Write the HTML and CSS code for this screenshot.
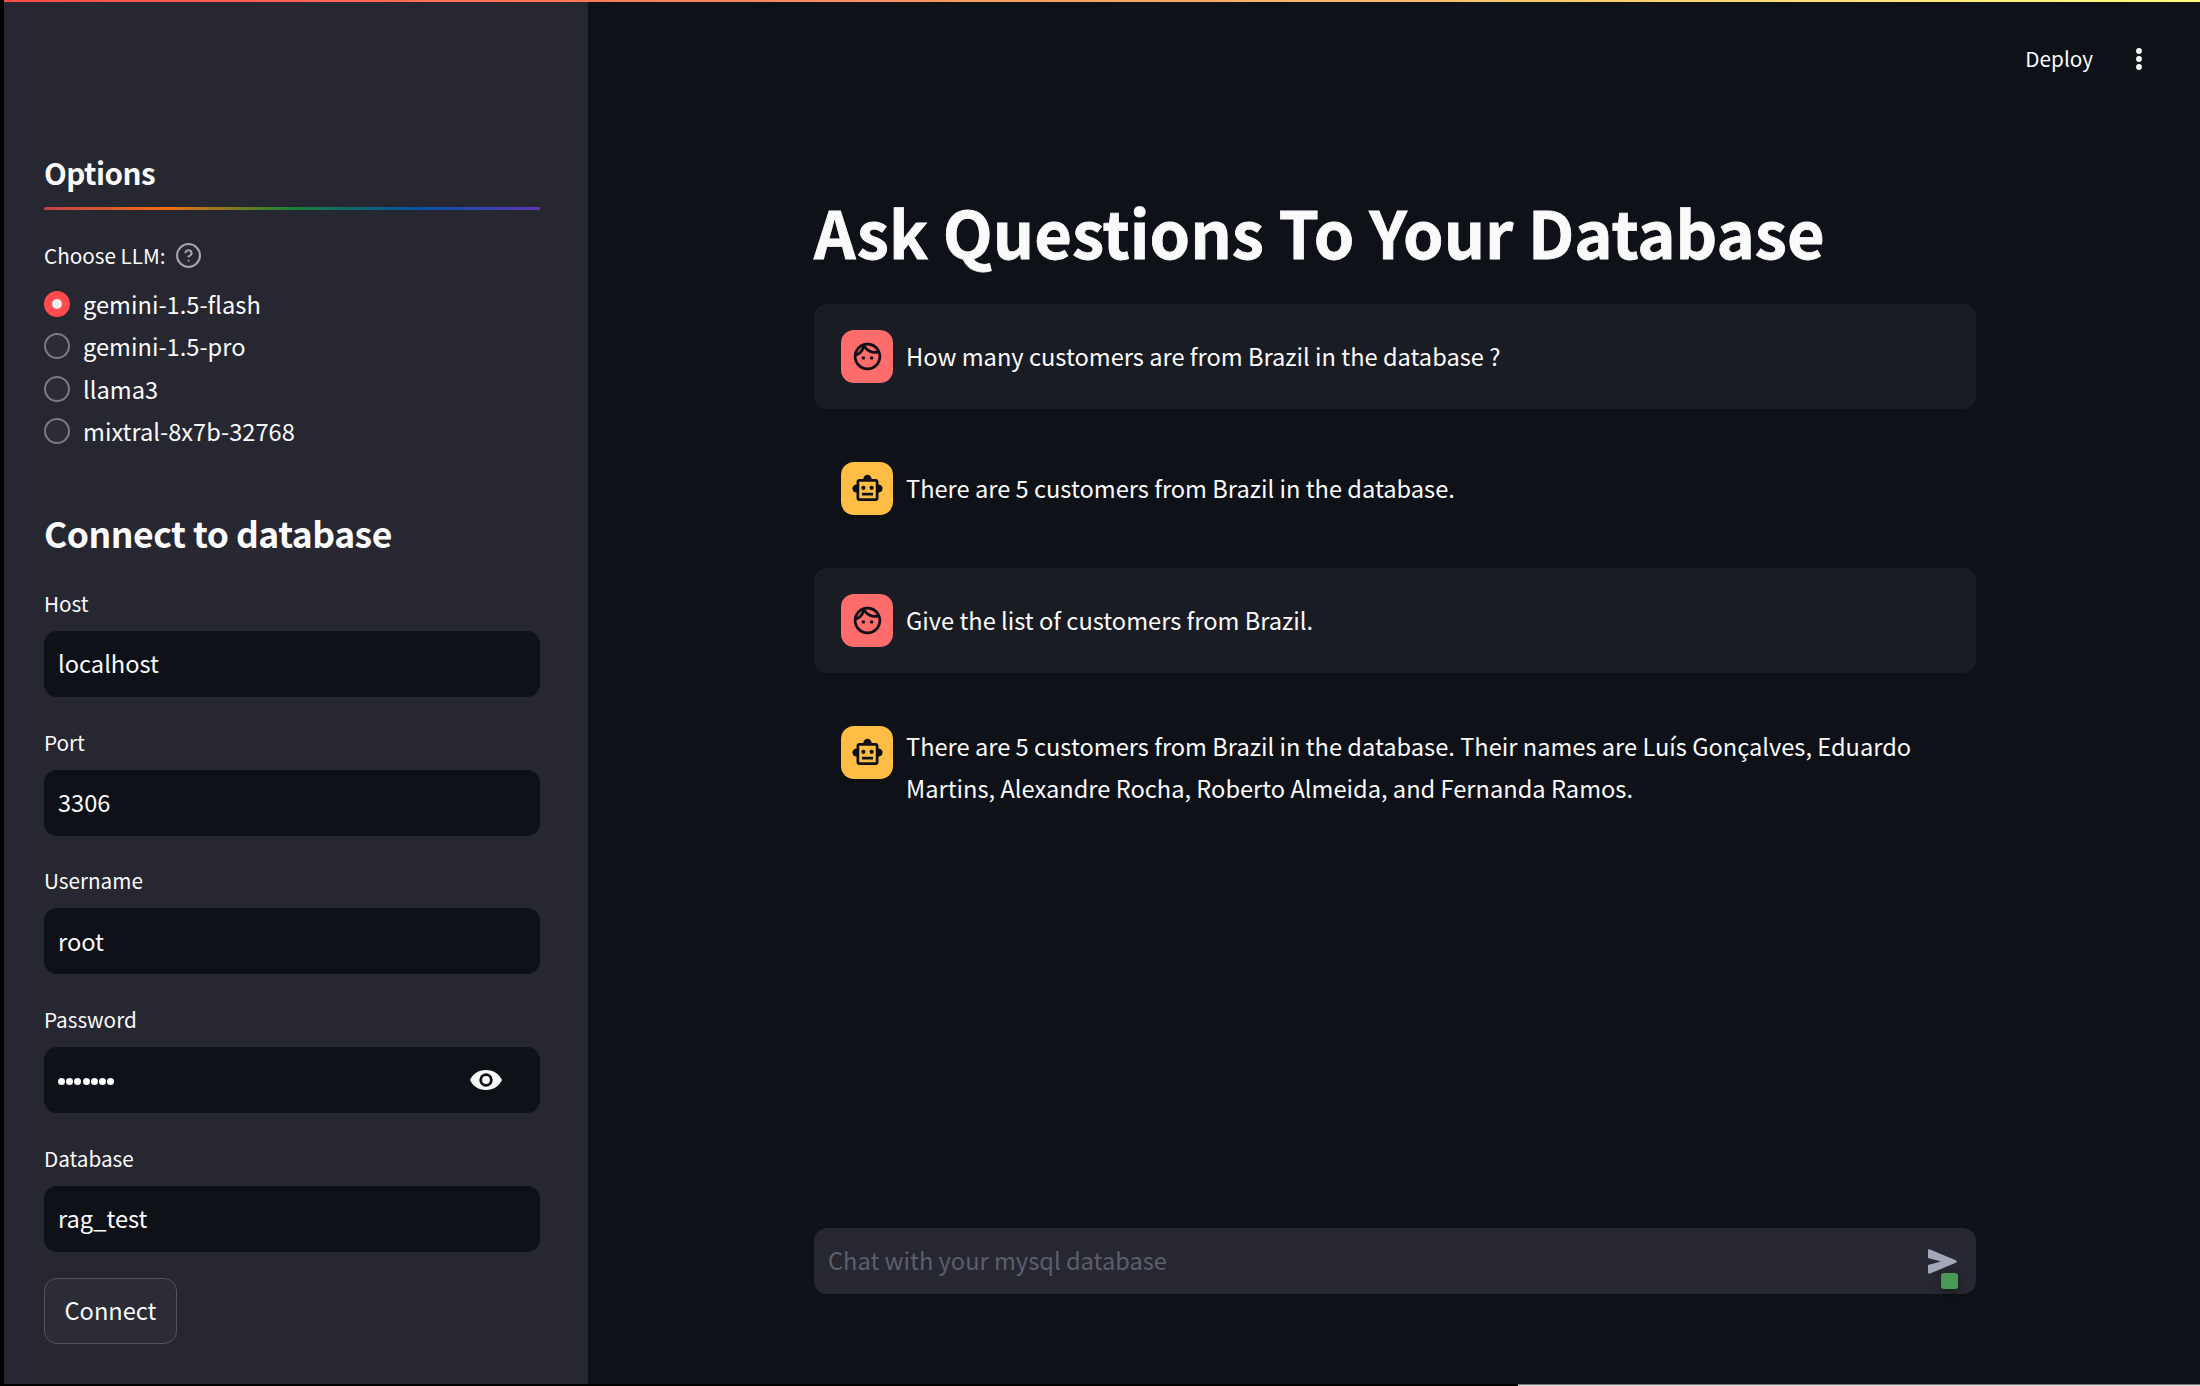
FILE: index.html
```html
<!DOCTYPE html>
<html lang="en">
<head>
<meta charset="utf-8">
<title>Ask Questions To Your Database</title>
<link rel="stylesheet" href="styles.css">
</head>
<body>
<svg class="defs" width="0" height="0">
  <symbol id="face" viewBox="0 0 24 24"><path d="M10.250 13c0 .69-.56 1.250-1.250 1.250S7.750 13.690 7.750 13s.56-1.250 1.250-1.250 1.250.56 1.250 1.250zM15 11.750c-.69 0-1.250.56-1.250 1.250s.56 1.250 1.250 1.250 1.250-.56 1.250-1.250-.56-1.250-1.250-1.250zm7 .25c0 5.520-4.480 10-10 10S2 17.520 2 12 6.480 2 12 2s10 4.480 10 10zM10.660 4.120C12.060 6.440 14.600 8 17.500 8c.46 0 .91-.05 1.340-.12C17.440 5.560 14.900 4 12 4c-.46 0-.91.05-1.340.12zM4.420 9.470c1.710-.97 3.030-2.550 3.660-4.440C6.370 6 5.050 7.580 4.420 9.470zM20 12c0-.78-.12-1.530-.33-2.240-.7.15-1.420.24-2.170.24-3.130 0-5.920-1.440-7.760-3.690C8.690 8.870 6.600 10.880 4 11.860c.01.04 0 .09 0 .14 0 4.410 3.590 8 8 8s8-3.590 8-8z"/></symbol>
  <symbol id="robot" viewBox="0 0 24 24"><path d="M20 9V7c0-1.100-.9-2-2-2h-3c0-1.660-1.340-3-3-3S9 3.340 9 5H6c-1.100 0-2 .9-2 2v2c-1.660 0-3 1.340-3 3s1.340 3 3 3v4c0 1.100.9 2 2 2h12c1.100 0 2-.9 2-2v-4c1.660 0 3-1.340 3-3s-1.340-3-3-3zm-2 10H6V7h12v12zm-9-6c-.83 0-1.500-.67-1.500-1.500S8.170 10 9 10s1.500.67 1.500 1.500S9.830 13 9 13zm7.500-1.500c0 .83-.67 1.500-1.500 1.500s-1.500-.67-1.500-1.500.67-1.500 1.500-1.500 1.500.67 1.500 1.500zM8 15h8v2H8v-2z"/></symbol>
</svg>
<div class="app">
  <aside class="sidebar">
    <h3 class="options">Options</h3>
    <div class="rainbow"></div>
    <div class="llm-label">
      <span>Choose LLM:</span>
      <svg class="help" viewBox="0 0 24 24"><circle cx="12" cy="12" r="11"/><path d="M9.090 9a3 3 0 0 1 5.830 1c0 2-3 3-3 3M12 17h.01"/></svg>
    </div>
    <div class="radios">
      <label class="radio"><span class="dot on"></span><span>gemini-1.5-flash</span></label>
      <label class="radio"><span class="dot"></span><span>gemini-1.5-pro</span></label>
      <label class="radio"><span class="dot"></span><span>llama3</span></label>
      <label class="radio"><span class="dot"></span><span>mixtral-8x7b-32768</span></label>
    </div>
    <h2 class="connect-title">Connect to database</h2>
    <div class="fields">
      <div class="field"><div class="label">Host</div><div class="input">localhost</div></div>
      <div class="field"><div class="label">Port</div><div class="input">3306</div></div>
      <div class="field"><div class="label">Username</div><div class="input">root</div></div>
      <div class="field"><div class="label">Password</div><div class="input"><span class="secret"><i></i><i></i><i></i><i></i><i></i><i></i><i></i></span>
        <svg class="eye" viewBox="0 0 32 20" preserveAspectRatio="none"><path d="M16 0C8.700 0 2.500 4.100 0 10c2.500 5.900 8.700 10 16 10s13.500-4.100 16-10C29.500 4.100 23.300 0 16 0zm0 16.700a6.700 6.700 0 1 1 0-13.400 6.700 6.700 0 0 1 0 13.400zm0-10.600a3.900 3.900 0 1 0 0 7.800 3.900 3.900 0 0 0 0-7.800z"/></svg></div></div>
      <div class="field"><div class="label">Database</div><div class="input">rag_test</div></div>
    </div>
    <button class="connect">Connect</button>
  </aside>
  <main class="main">
    <header class="header">
      <span class="deploy">Deploy</span>
      <svg class="kebab" viewBox="0 0 6 24"><circle cx="3" cy="4" r="2.900"/><circle cx="3" cy="12" r="2.900"/><circle cx="3" cy="20" r="2.900"/></svg>
    </header>
    <section class="chat">
      <h1 class="title">Ask Questions To Your Database</h1>
      <div class="messages">
        <div class="msg user"><span class="avatar"><svg><use href="#face"/></svg></span><p>How many customers are from Brazil in the database ?</p></div>
        <div class="msg"><span class="avatar bot"><svg><use href="#robot"/></svg></span><p>There are 5 customers from Brazil in the database.</p></div>
        <div class="msg user"><span class="avatar"><svg><use href="#face"/></svg></span><p>Give the list of customers from Brazil.</p></div>
        <div class="msg"><span class="avatar bot"><svg><use href="#robot"/></svg></span><p class="long">There are 5 customers from Brazil in the database. Their names are Luís Gonçalves, Eduardo<br>Martins, Alexandre Rocha, Roberto Almeida, and Fernanda Ramos.</p></div>
      </div>
      <div class="prompt">
        <span class="placeholder">Chat with your mysql database</span>
        <svg class="send" viewBox="0 0 29 25"><path d="M0 1.700C0 .4 1 0 2 .4l25.800 10.900c1.300.6 1.300 1.800 0 2.400L2 24.600c-1 .4-2 0-2-1.300V15.900L13 12.500 0 9.100z"/></svg>
        <i class="badge"></i>
      </div>
    </section>
  </main>
</div>
<div class="edge-top"></div>
<div class="edge-bottom"><i></i></div>
</body>
</html>
```
FILE: styles.css
```css
* { box-sizing: border-box; }
body {
  margin: 0;
  width: 2200px;
  height: 1386px;
  overflow: hidden;
  background: #0e1117;
  color: #fafafa;
  font-family: "Noto Sans CJK JP", "Noto Sans CJK SC", sans-serif;
  font-size: 23.65px;
  line-height: 42px;
}
h1, h2, h3, p { margin: 0; }
.defs { position: absolute; }
.app { display: flex; height: 1386px; }
.sidebar {
  width: 588px;
  flex: none;
  padding: 153px 48px 0 40px;
  border-left: 4px solid #000;
  background: #262730;
  display: flex;
  flex-direction: column;
}
.options { font-size: 29.6px; line-height: 40px; font-weight: 600; letter-spacing: -0.5px; }
.rainbow {
  height: 3px;
  margin-top: 14px;
  border-radius: 2px;
  background: linear-gradient(90deg, #c0424a, #f3700f 25%, #158237 50%, #0054a3 75%, #803df5aa);
}
.llm-label { display: flex; align-items: center; gap: 10px; height: 40px; margin-top: 25px; font-size: 20.7px; line-height: 40px; }
.help { width: 25px; height: 25px; margin-top: 1px; fill: none; stroke: #a3a3a8; stroke-width: 2; stroke-linecap: round; stroke-linejoin: round; }
.radios { margin-top: 8px; }
.radio { display: flex; height: 42.3px; align-items: center; gap: 13px; line-height: 42px; }
.dot { width: 26px; height: 26px; border: 2px solid #7b7b82; border-radius: 50%; background: #2b2c36; }
.dot.on { border: 8px solid #ff4b4b; background: #f0f2f6; }
.connect-title { margin-top: 55px; font-size: 35.5px; line-height: 52px; font-weight: 600; letter-spacing: -0.5px; white-space: nowrap; }
.fields { display: flex; flex-direction: column; gap: 26.750px; margin-top: 25.8px; }
.field { height: 112px; }
.label { font-size: 20.7px; line-height: 30px; height: 46px; padding-top: 3px; }
.input { display: flex; align-items: center; height: 66px; padding: 0 38px 1px 14px; border-radius: 13px; background: #0e1117; }
.secret { display: flex; gap: 1.200px; padding-top: 3px; }
.secret i { width: 7px; height: 7px; border-radius: 50%; background: #fafafa; }
.eye { width: 32px; height: 20px; margin-left: auto; fill: #fafafa; }
.connect { width: 133px; height: 66px; margin-top: 26px; padding: 0 0 1px; border: 1px solid #52535b; border-radius: 13px; background: #2b2c36; color: #fafafa; font: inherit; }
.main { flex: 1; display: flex; flex-direction: column; }
.header { display: flex; justify-content: flex-end; align-items: center; height: 117px; padding-right: 58px; gap: 43px; font-size: 20.7px; }
.kebab { width: 6px; height: 24px; fill: #fafafa; }
.deploy { padding-bottom: 1px; }
.chat { width: 1162px; margin-left: 226px; display: flex; flex-direction: column; }
.title { margin-top: 73px; height: 114px; font-size: 64.9px; line-height: 82px; font-weight: 700; white-space: nowrap; -webkit-text-stroke: 0.8px #fafafa; }
.messages { display: flex; flex-direction: column; gap: 27px; height: 924px; }
.msg { display: flex; gap: 13px; height: 105px; padding: 26px 27px; border-radius: 13px; }
.msg.user { background: #1a1c24; }
.msg p { white-space: nowrap; padding-top: 5px; }
.msg .long { padding-top: 0; margin-top: -1px; }
.avatar { flex: none; display: flex; align-items: center; justify-content: center; width: 52px; height: 53px; border-radius: 13px; background: #ff6c6c; }
.avatar.bot { background: #ffbd45; }
.avatar svg { width: 33px; height: 33px; fill: #0e1117; }
.prompt { position: relative; display: flex; align-items: center; justify-content: space-between; height: 66px; padding: 0 19px 0 14px; border-radius: 13px; background: #262730; color: #5c5f6b; }
.placeholder { padding-bottom: 3px; }
.send { width: 29px; height: 25px; fill: #a3a8b8; }
.badge { position: absolute; right: 18px; bottom: 5px; width: 17px; height: 16px; border-radius: 3px; background: #4b9958; box-shadow: 0 3px 8px #00000055; }
.edge-top { position: absolute; top: 0; left: 4px; right: 0; height: 2px; background: linear-gradient(90deg, #ff4b4b, #fffd80); }
.edge-bottom { position: absolute; top: 1384px; left: 0; right: 0; height: 2px; background: #000; }
.edge-bottom i { display: block; height: 2px; margin-left: 1518px; background: linear-gradient(#777 50%, #ddd 50%); }
```
